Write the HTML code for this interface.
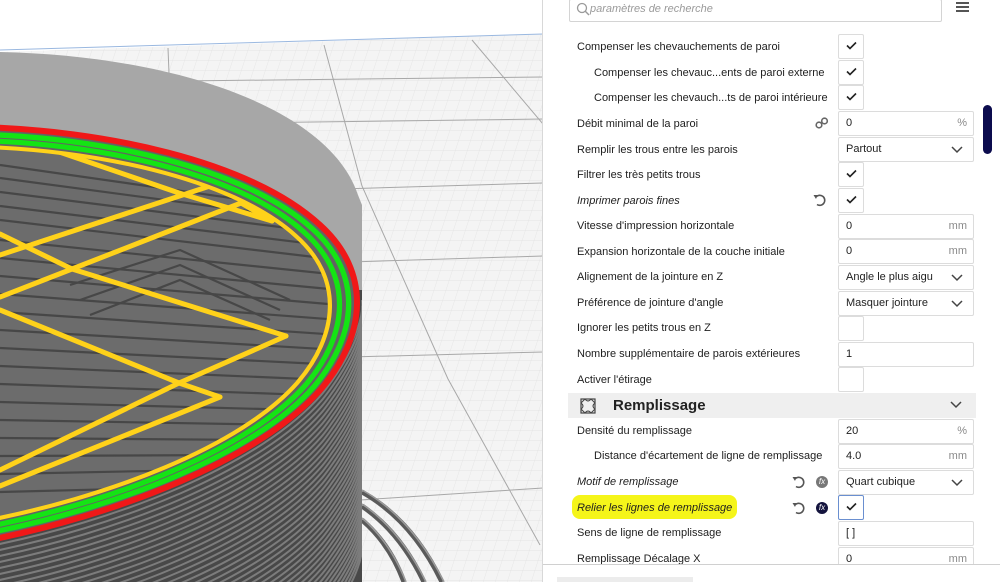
<!DOCTYPE html>
<html><head><meta charset="utf-8"><style>
*{margin:0;padding:0;box-sizing:border-box}
html,body{width:1000px;height:582px;overflow:hidden}
body{position:relative;background:#fff;font-family:"Liberation Sans",sans-serif;font-size:11px;color:#1e1e1e}
#vp{position:absolute;left:0;top:0;width:543px;height:582px;overflow:hidden}
#panel{position:absolute;left:542px;top:0;width:458px;height:582px;background:#fff;border-left:1px solid #d8d8d8;overflow:hidden}
.l{position:absolute;left:34px;white-space:nowrap;line-height:14px}
.l.i{left:51px}
.l.it{font-style:italic}
.c{position:absolute;left:295px;height:25px;border:1px solid #dcdcdc;border-radius:2px;background:#fff;line-height:23px;padding-left:7px;font-size:11px}
.cb{width:26px;padding:0;text-align:center}
.cb svg{margin-top:6px}
.in{width:136px}
.u{position:absolute;right:6px;top:0;color:#8a8a8a}
.dd svg{position:absolute;right:10px;top:8px}
</style></head><body>
<div id="vp">
<svg width="543" height="582" viewBox="0 0 543 582">
<defs>
<pattern id="fg" width="12" height="10" patternUnits="userSpaceOnUse" patternTransform="skewX(-18)">
<path d="M0 0H12M0 0V10" stroke="#e2e2e2" stroke-width="0.8" fill="none"/>
</pattern>
<path id="ring" d="M-20,127 C100,130 250,160 320,225 C372,272 366,335 322,388 C262,458 120,515 -20,542 L-60,542 L-60,127 Z"/>
<clipPath id="inner"><use href="#ring" transform="translate(-60 335) scale(0.93 0.9) translate(60 -335)"/></clipPath>
<clipPath id="bodyclip"><path d="M0,300 H362 V582 H0Z"/></clipPath>
</defs>
<rect width="543" height="582" fill="#fff"/>
<polygon points="0,52 543,34 543,582 0,582" fill="#f4f4f4"/>
<polygon points="0,52 543,34 543,582 0,582" fill="url(#fg)"/>
<path d="M0,50 L543,34" stroke="#9ab8e0" stroke-width="1"/>
<g stroke="#a8a8a8" stroke-width="1" fill="none">
<path d="M0,83 L543,77"/><path d="M0,126 L543,119"/><path d="M340,189 L543,183"/><path d="M350,262 L543,256"/>
<path d="M350,357 L543,352"/><path d="M360,500 L543,488"/>
<path d="M168,48 L172,150"/><path d="M324,45 L362,186 L448,379 L540,545"/><path d="M472,40 L543,124"/>
</g>
<!-- handle -->
<g fill="none" stroke="#5a5a5a" stroke-width="5">
<path d="M362,492 Q412,520 442,582"/><path d="M362,506 Q400,532 424,582"/><path d="M362,520 Q390,544 404,582"/>
</g>
<g fill="none" stroke="#9a9a9a" stroke-width="1.5">
<path d="M362,490 Q412,518 444,582"/><path d="M362,504 Q400,530 426,582"/><path d="M362,518 Q390,542 406,582"/>
</g>
<!-- ghost cylinder -->
<path d="M0,52 C180,56 330,110 358,195 L362,205 L362,582 L0,582Z" fill="#a7a7a7"/>
<!-- body -->
<rect x="0" y="290" width="362" height="292" fill="#484848"/>
<use href="#ring" fill="#484848"/>
<g clip-path="url(#bodyclip)" fill="none" stroke="#7c7c7c" stroke-width="2">
<path id="bc" d="M362,300 C366,335 322,388 322,388 C262,458 120,515 -20,542"/>
<use href="#bc" y="6"/><use href="#bc" y="12"/><use href="#bc" y="18"/><use href="#bc" y="24"/><use href="#bc" y="30"/>
<use href="#bc" y="36"/><use href="#bc" y="42"/><use href="#bc" y="48"/><use href="#bc" y="54"/><use href="#bc" y="60"/>
<use href="#bc" y="66"/><use href="#bc" y="72"/><use href="#bc" y="78"/><use href="#bc" y="84"/><use href="#bc" y="90"/>
<use href="#bc" y="96"/><use href="#bc" y="102"/><use href="#bc" y="108"/><use href="#bc" y="114"/><use href="#bc" y="120"/>
<use href="#bc" y="126"/><use href="#bc" y="132"/><use href="#bc" y="138"/><use href="#bc" y="144"/><use href="#bc" y="150"/>
<use href="#bc" y="156"/><use href="#bc" y="162"/><use href="#bc" y="168"/><use href="#bc" y="174"/><use href="#bc" y="180"/>
<use href="#bc" y="186"/><use href="#bc" y="192"/><use href="#bc" y="198"/><use href="#bc" y="204"/><use href="#bc" y="210"/>
<use href="#bc" y="216"/><use href="#bc" y="222"/><use href="#bc" y="228"/><use href="#bc" y="234"/><use href="#bc" y="240"/>
</g>
<!-- top interior -->
<use href="#ring" fill="#636363"/>
<g clip-path="url(#inner)">
<rect x="0" y="100" width="362" height="460" fill="#6c6c6c"/>
<g fill="none" stroke="#474747" stroke-width="2.2">
<path d="M0,165 L280,205"/><path d="M0,178 L300,218"/><path d="M0,192 L320,232"/><path d="M0,206 L330,246"/><path d="M0,220 L340,260"/>
<path d="M0,240 L340,275"/><path d="M0,258 L340,290"/><path d="M0,276 L340,305"/><path d="M0,294 L340,320"/><path d="M0,312 L340,335"/>
<path d="M0,330 L340,350"/><path d="M0,348 L340,365"/><path d="M0,366 L330,380"/><path d="M0,384 L310,395"/><path d="M0,402 L300,410"/>
<path d="M0,420 L290,425"/><path d="M0,438 L260,440"/><path d="M0,456 L240,455"/><path d="M0,474 L200,470"/><path d="M0,492 L160,488"/>
<path d="M70,285 L180,250 L290,300"/><path d="M80,300 L180,265 L280,310"/><path d="M90,315 L180,280 L270,320"/>
</g>
<g fill="none" stroke="#ffd21a" stroke-width="5" stroke-linecap="round" stroke-linejoin="round">
<path d="M33,143 L179,193 L272,221"/>
<path d="M0,234 L72,269 L286,336"/>
<path d="M0,310 L179,383 L220,397"/>
<path d="M210,186 L0,255"/>
<path d="M241,203 L72,269 L0,297"/>
<path d="M286,336 L179,383 L0,470"/>
<path d="M220,397 L0,486"/>
<path d="M241,203 L272,221"/>
</g>
</g>
<g fill="none" stroke-linejoin="round">
<use href="#ring" transform="translate(-60 335) scale(0.935 0.905) translate(60 -335)" stroke="#ffd21a" stroke-width="4.5"/>
<use href="#ring" transform="translate(-60 335) scale(0.958 0.935) translate(60 -335)" stroke="#14e414" stroke-width="5.5"/>
<use href="#ring" transform="translate(-60 335) scale(0.98 0.965) translate(60 -335)" stroke="#14e414" stroke-width="5.5"/>
<use href="#ring" stroke="#f01818" stroke-width="6"/>
</g>
</svg>
</div>
<div id="panel">
<div style="position:absolute;left:26px;top:-1px;width:373px;height:23px;border:1px solid #d4d4d4;border-radius:2px"></div>
<svg style="position:absolute;left:33px;top:2px" width="14" height="14" viewBox="0 0 14 14"><circle cx="6" cy="6" r="4.5" fill="none" stroke="#9a9a9a" stroke-width="1.3"/><path d="M9.3 9.3L13 13" stroke="#9a9a9a" stroke-width="1.4"/></svg>
<div style="position:absolute;left:47px;top:3px;color:#9a9a9a;font-style:italic">paramètres de recherche</div>
<svg style="position:absolute;left:413px;top:2px" width="13" height="10"><path d="M0 1H13M0 5H13M0 9H13" stroke="#555" stroke-width="2"/></svg>
<div style="position:absolute;left:440px;top:105px;width:9px;height:49px;background:#0c0c4e;border-radius:5px"></div>

<div class="l" style="top:40px">Compenser les chevauchements de paroi</div>
<div class="c cb" style="top:34px"><svg width="11" height="9"><path d="M1 4.5L4 7.5L10 1.5" stroke="#222" stroke-width="1.6" fill="none"/></svg></div>
<div class="l i" style="top:66px">Compenser les chevauc...ents de paroi externe</div>
<div class="c cb" style="top:60px"><svg width="11" height="9"><path d="M1 4.5L4 7.5L10 1.5" stroke="#222" stroke-width="1.6" fill="none"/></svg></div>
<div class="l i" style="top:91px">Compenser les chevauch...ts de paroi intérieure</div>
<div class="c cb" style="top:85px"><svg width="11" height="9"><path d="M1 4.5L4 7.5L10 1.5" stroke="#222" stroke-width="1.6" fill="none"/></svg></div>
<div class="l" style="top:117px">Débit minimal de la paroi</div>
<svg style="position:absolute;left:272px;top:117px" width="14" height="12"><circle cx="4" cy="8" r="2.8" fill="none" stroke="#666" stroke-width="1.6"/><circle cx="9.5" cy="4" r="2.8" fill="none" stroke="#666" stroke-width="1.6"/></svg>
<div class="c in" style="top:111px">0<span class="u">%</span></div>
<div class="l" style="top:143px">Remplir les trous entre les parois</div>
<div class="c in dd" style="top:137px">Partout<svg width="12" height="8"><path d="M1 1L6 6L11 1" stroke="#444" stroke-width="1.5" fill="none"/></svg></div>
<div class="l" style="top:168px">Filtrer les très petits trous</div>
<div class="c cb" style="top:162px"><svg width="11" height="9"><path d="M1 4.5L4 7.5L10 1.5" stroke="#222" stroke-width="1.6" fill="none"/></svg></div>
<div class="l it" style="top:194px">Imprimer parois fines</div>
<svg style="position:absolute;left:270px;top:193px" width="14" height="14" viewBox="0 0 14 14"><path d="M3 4A5 5 0 1 1 4 11.5" stroke="#555" stroke-width="1.6" fill="none"/><path d="M0.5 2L4.5 2L3 6Z" fill="#555"/></svg>
<div class="c cb" style="top:188px"><svg width="11" height="9"><path d="M1 4.5L4 7.5L10 1.5" stroke="#222" stroke-width="1.6" fill="none"/></svg></div>
<div class="l" style="top:219px">Vitesse d'impression horizontale</div>
<div class="c in" style="top:214px">0<span class="u">mm</span></div>
<div class="l" style="top:245px">Expansion horizontale de la couche initiale</div>
<div class="c in" style="top:239px">0<span class="u">mm</span></div>
<div class="l" style="top:270px">Alignement de la jointure en Z</div>
<div class="c in dd" style="top:265px">Angle le plus aigu<svg width="12" height="8"><path d="M1 1L6 6L11 1" stroke="#444" stroke-width="1.5" fill="none"/></svg></div>
<div class="l" style="top:296px">Préférence de jointure d'angle</div>
<div class="c in dd" style="top:291px">Masquer jointure<svg width="12" height="8"><path d="M1 1L6 6L11 1" stroke="#444" stroke-width="1.5" fill="none"/></svg></div>
<div class="l" style="top:321px">Ignorer les petits trous en Z</div>
<div class="c cb" style="top:316px"></div>
<div class="l" style="top:347px">Nombre supplémentaire de parois extérieures</div>
<div class="c in" style="top:342px">1</div>
<div class="l" style="top:373px">Activer l'étirage</div>
<div class="c cb" style="top:367px"></div>

<div style="position:absolute;left:25px;top:393px;width:408px;height:25px;background:#efefef"></div>
<svg style="position:absolute;left:37px;top:398px" width="16" height="16" viewBox="0 0 16 16"><rect x="1" y="1" width="14" height="14" fill="none" stroke="#444" stroke-width="1.2"/><path d="M1 5L5 1M11 1L15 5M15 11L11 15M5 15L1 11M5 1Q8 5 11 1M15 5Q11 8 15 11M11 15Q8 11 5 15M1 11Q5 8 1 5" stroke="#444" stroke-width="1" fill="none"/></svg>
<div style="position:absolute;left:70px;top:397px;font-size:15px;font-weight:bold;color:#222">Remplissage</div>
<svg style="position:absolute;left:407px;top:401px" width="12" height="8"><path d="M1 1L6 6L11 1" stroke="#444" stroke-width="1.5" fill="none"/></svg>

<div class="l" style="top:424px">Densité du remplissage</div>
<div class="c in" style="top:419px">20<span class="u">%</span></div>
<div class="l i" style="top:449px">Distance d'écartement de ligne de remplissage</div>
<div class="c in" style="top:444px">4.0<span class="u">mm</span></div>
<div class="l it" style="top:475px">Motif de remplissage</div>
<svg style="position:absolute;left:249px;top:475px" width="14" height="14" viewBox="0 0 14 14"><path d="M3 4A5 5 0 1 1 4 11.5" stroke="#555" stroke-width="1.6" fill="none"/><path d="M0.5 2L4.5 2L3 6Z" fill="#555"/></svg>
<div style="position:absolute;left:273px;top:476px;width:12px;height:12px;border-radius:6px;background:#777;color:#fff;font-size:8px;text-align:center;line-height:12px;font-style:italic">fx</div>
<div class="c in dd" style="top:470px">Quart cubique<svg width="12" height="8"><path d="M1 1L6 6L11 1" stroke="#444" stroke-width="1.5" fill="none"/></svg></div>
<div style="position:absolute;left:29px;top:495px;width:165px;height:24px;background:#f5f51a;border-radius:8px"></div>
<div class="l it" style="top:501px">Relier les lignes de remplissage</div>
<svg style="position:absolute;left:249px;top:501px" width="14" height="14" viewBox="0 0 14 14"><path d="M3 4A5 5 0 1 1 4 11.5" stroke="#555" stroke-width="1.6" fill="none"/><path d="M0.5 2L4.5 2L3 6Z" fill="#555"/></svg>
<div style="position:absolute;left:273px;top:502px;width:12px;height:12px;border-radius:6px;background:#14143e;color:#fff;font-size:8px;text-align:center;line-height:12px;font-style:italic">fx</div>
<div class="c cb" style="top:495px;border-color:#6a8fd0"><svg width="11" height="9"><path d="M1 4.5L4 7.5L10 1.5" stroke="#222" stroke-width="1.6" fill="none"/></svg></div>
<div class="l" style="top:526px">Sens de ligne de remplissage</div>
<div class="c in" style="top:521px">[ ]</div>
<div class="l" style="top:552px">Remplissage Décalage X</div>
<div class="c in" style="top:547px">0<span class="u">mm</span></div>
<div style="position:absolute;left:0;top:564px;width:458px;height:18px;background:#fff;border-top:1px solid #d0d0d0"></div>
<div style="position:absolute;left:14px;top:577px;width:136px;height:5px;background:#ececec"></div>
</div>
</body></html>
